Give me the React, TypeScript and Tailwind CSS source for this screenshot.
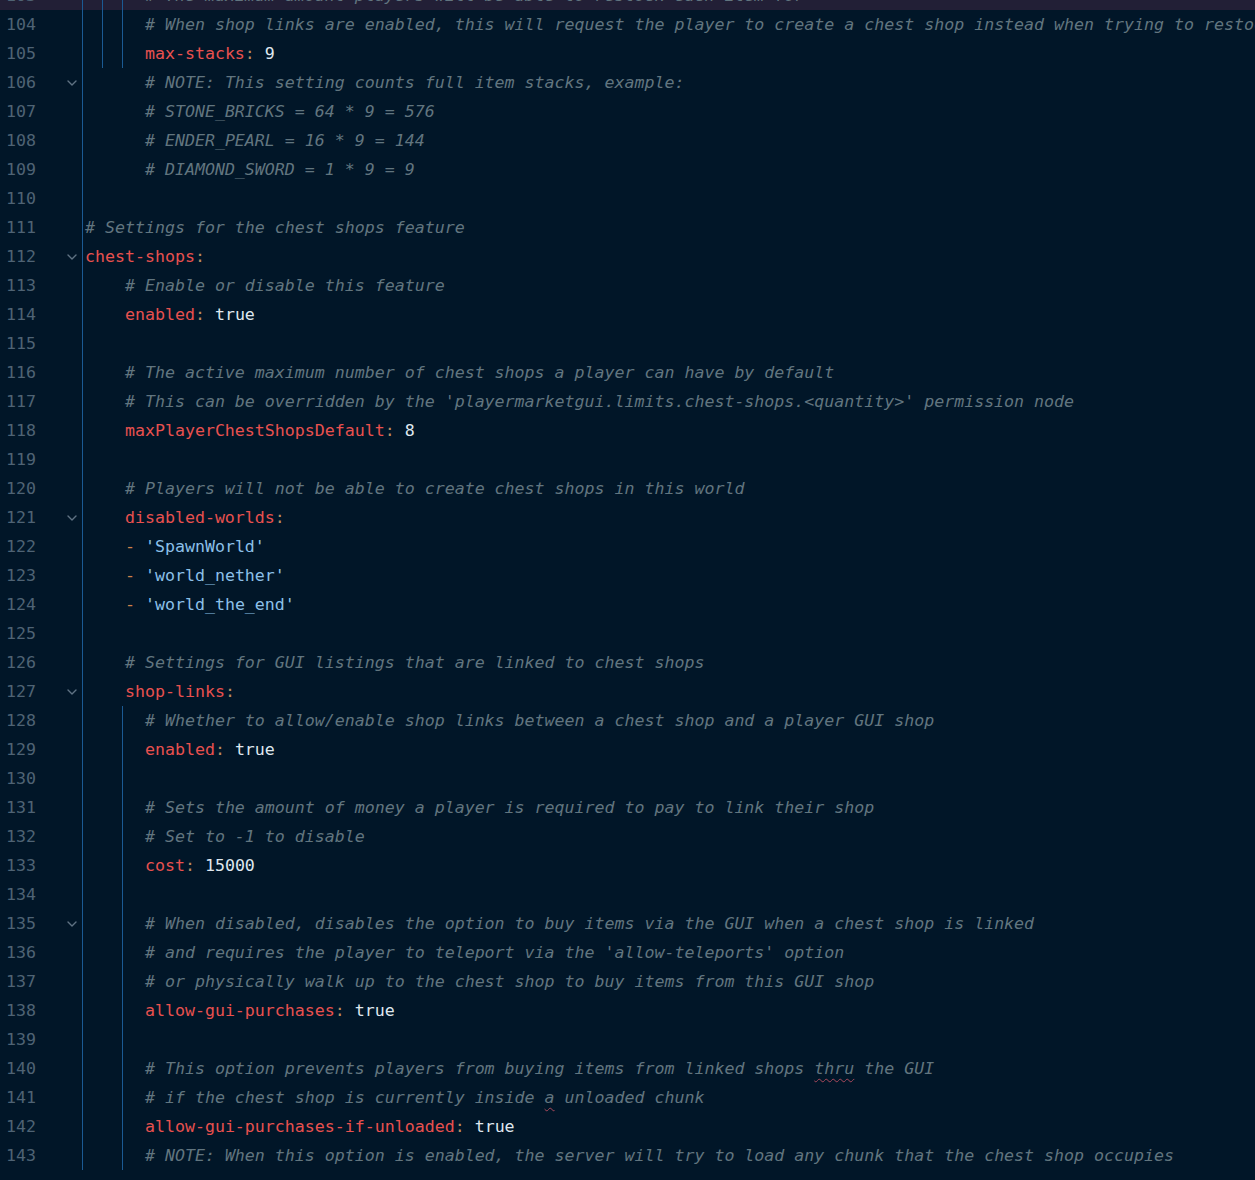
import React from "react";

type Line = {
  n: number;
  text: string;
  fold?: boolean;
  guides?: number[];
  active?: boolean;
};

const lines: Line[] = [
  { n: 103, text: "      # The maximum amount players will be able to restock each item for", guides: [102, 122], active: true },
  { n: 104, text: "      # When shop links are enabled, this will request the player to create a chest shop instead when trying to restock", guides: [102, 122] },
  { n: 105, text: "      max-stacks: 9", guides: [102, 122] },
  { n: 106, text: "      # NOTE: This setting counts full item stacks, example:", fold: true },
  { n: 107, text: "      # STONE_BRICKS = 64 * 9 = 576" },
  { n: 108, text: "      # ENDER_PEARL = 16 * 9 = 144" },
  { n: 109, text: "      # DIAMOND_SWORD = 1 * 9 = 9" },
  { n: 110, text: "" },
  { n: 111, text: "# Settings for the chest shops feature" },
  { n: 112, text: "chest-shops:", fold: true },
  { n: 113, text: "    # Enable or disable this feature" },
  { n: 114, text: "    enabled: true" },
  { n: 115, text: "" },
  { n: 116, text: "    # The active maximum number of chest shops a player can have by default" },
  { n: 117, text: "    # This can be overridden by the 'playermarketgui.limits.chest-shops.<quantity>' permission node" },
  { n: 118, text: "    maxPlayerChestShopsDefault: 8" },
  { n: 119, text: "" },
  { n: 120, text: "    # Players will not be able to create chest shops in this world" },
  { n: 121, text: "    disabled-worlds:", fold: true },
  { n: 122, text: "    - 'SpawnWorld'" },
  { n: 123, text: "    - 'world_nether'" },
  { n: 124, text: "    - 'world_the_end'" },
  { n: 125, text: "" },
  { n: 126, text: "    # Settings for GUI listings that are linked to chest shops" },
  { n: 127, text: "    shop-links:", fold: true },
  { n: 128, text: "      # Whether to allow/enable shop links between a chest shop and a player GUI shop", guides: [122] },
  { n: 129, text: "      enabled: true", guides: [122] },
  { n: 130, text: "", guides: [122] },
  { n: 131, text: "      # Sets the amount of money a player is required to pay to link their shop", guides: [122] },
  { n: 132, text: "      # Set to -1 to disable", guides: [122] },
  { n: 133, text: "      cost: 15000", guides: [122] },
  { n: 134, text: "", guides: [122] },
  { n: 135, text: "      # When disabled, disables the option to buy items via the GUI when a chest shop is linked", fold: true, guides: [122] },
  { n: 136, text: "      # and requires the player to teleport via the 'allow-teleports' option", guides: [122] },
  { n: 137, text: "      # or physically walk up to the chest shop to buy items from this GUI shop", guides: [122] },
  { n: 138, text: "      allow-gui-purchases: true", guides: [122] },
  { n: 139, text: "", guides: [122] },
  { n: 140, text: "      # This option prevents players from buying items from linked shops ~thru~ the GUI", guides: [122] },
  { n: 141, text: "      # if the chest shop is currently inside ~a~ unloaded chunk", guides: [122] },
  { n: 142, text: "      allow-gui-purchases-if-unloaded: true", guides: [122] },
  { n: 143, text: "      # NOTE: When this option is enabled, the server will try to load any chunk that the chest shop occupies", guides: [122] },
];

function Comment({ text }: { text: string }) {
  // ~word~ marks a typo squiggle
  const parts = text.split("~");
  return (
    <span className="italic text-[#61757f]">
      {parts.map((p, i) =>
        i % 2 === 1 ? (
          <span key={i} className="underline decoration-wavy decoration-[#a8485a] underline-offset-[4px] decoration-1">
            {p}
          </span>
        ) : (
          <span key={i}>{p}</span>
        )
      )}
    </span>
  );
}

function Code({ text }: { text: string }) {
  const indent = text.match(/^ */)![0];
  const body = text.slice(indent.length);
  if (!body) return null;

  if (body.startsWith("#")) {
    return (
      <>
        {indent}
        <Comment text={body} />
      </>
    );
  }

  if (body.startsWith("- ")) {
    return (
      <>
        {indent}
        <span className="text-[#d0814a]">-</span>{" "}
        <span className="text-[#8cc0e8]">{body.slice(2)}</span>
      </>
    );
  }

  const idx = body.indexOf(":");
  const key = body.slice(0, idx);
  const value = body.slice(idx + 1);
  return (
    <>
      {indent}
      <span className="text-[#e8514f]">{key}</span>
      <span className="text-[#b98a62]">:</span>
      <span className="text-[#dfe7ef]">{value}</span>
    </>
  );
}

function Chevron() {
  return (
    <svg width="12" height="12" viewBox="0 0 12 12" fill="none" className="text-[#5f7283]">
      <path d="M2 4l4 4 4-4" stroke="currentColor" strokeWidth="1.4" strokeLinecap="round" strokeLinejoin="round" />
    </svg>
  );
}

export default function App() {
  return (
    <main
      className="h-[1180px] w-full overflow-hidden bg-[#011628] text-[16.6px] leading-[29px]"
      style={{ fontFamily: '"DejaVu Sans Mono", "Liberation Mono", monospace' }}
    >
      <div className="-mt-[19px]">
        {lines.map((line) => (
          <div
            key={line.n}
            className={`relative flex h-[29px] ${line.active ? "bg-[#221f36]" : ""}`}
          >
            {/* Gutter */}
            <div className="flex w-[82px] shrink-0 items-center">
              <span className="w-[66px] pl-[6px] text-[#4f6374]">{line.n}</span>
              {line.fold && <Chevron />}
            </div>

            {/* Code */}
            <div className="flex-1 whitespace-pre border-l border-[#1b5a93] pl-[2px]">
              <Code text={line.text} />
            </div>

            {line.guides?.map((x) => (
              <span
                key={x}
                className="absolute top-0 h-full w-px bg-[#1b5a93]"
                style={{ left: x }}
              />
            ))}
          </div>
        ))}
      </div>
    </main>
  );
}
